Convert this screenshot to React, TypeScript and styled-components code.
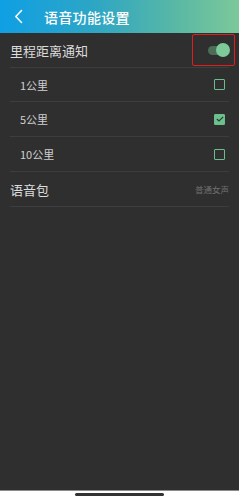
import React, { useState } from 'react'
import styled, { createGlobalStyle } from 'styled-components'

const GlobalStyle = createGlobalStyle`
  html, body {
    margin: 0;
    padding: 0;
    height: 100%;
    background: #2f2f2f;
    font-family: "Noto Sans CJK SC", "Noto Sans", sans-serif;
  }
  #root {
    height: 100%;
  }
`

const Screen = styled.div`
  height: 500px;
  display: flex;
  flex-direction: column;
  background: #2f2f2f;
`

const Header = styled.header`
  height: 33px;
  flex-shrink: 0;
  display: flex;
  align-items: center;
  padding-left: 10px;
  background: linear-gradient(90deg, #0f9fe4 0%, #2ea6c4 40%, #5bb9a4 75%, #7cc89a 100%);
`

const BackButton = styled.button`
  width: 16px;
  height: 20px;
  padding: 0;
  border: none;
  background: none;
  display: flex;
  align-items: center;
  justify-content: center;
`

const Title = styled.h1`
  margin: 0 0 0 18px;
  font-size: 14px;
  font-weight: 500;
  color: #ffffff;
  letter-spacing: 0.3px;
`

const List = styled.div`
  flex: 1;
  display: flex;
  flex-direction: column;
`

const Row = styled.div<{ $sub?: boolean; $h?: number }>`
  height: ${(p) => p.$h ?? 35}px;
  box-sizing: border-box;
  margin: 0 10px;
  padding-left: ${(p) => (p.$sub ? '10px' : '0')};
  display: flex;
  align-items: center;
  justify-content: space-between;
  border-bottom: 1px solid #3d3d3d;
`

const Label = styled.span<{ $sub?: boolean }>`
  font-size: ${(p) => (p.$sub ? '11px' : '13px')};
  color: ${(p) => (p.$sub ? '#d0d0d0' : '#dcdcdc')};
`

const Value = styled.span`
  font-size: 8.5px;
  color: #6f6f6f;
`

const SwitchWrap = styled.div`
  position: relative;
  width: 43px;
  height: 32px;
  margin-right: -6px;
  display: flex;
  align-items: center;
  justify-content: flex-end;
  padding-right: 6px;
  box-sizing: border-box;
`

const Highlight = styled.div`
  position: absolute;
  inset: 0;
  border: 1px solid #e01e1e;
  border-radius: 2px;
`

const Track = styled.div<{ $on: boolean }>`
  position: relative;
  width: 18px;
  height: 9px;
  margin-right: 3px;
  border-radius: 5px;
  background: ${(p) => (p.$on ? '#4c6e58' : '#555')};
`

const Knob = styled.div<{ $on: boolean }>`
  position: absolute;
  top: -2.5px;
  left: ${(p) => (p.$on ? '8px' : '-4px')};
  width: 14px;
  height: 14px;
  border-radius: 50%;
  background: ${(p) => (p.$on ? '#7ccb98' : '#aaa')};
`

const Box = styled.div<{ $checked: boolean }>`
  width: 11px;
  height: 11px;
  box-sizing: border-box;
  margin-right: 4px;
  border: 1.5px solid #69be8b;
  border-radius: 1px;
  background: ${(p) => (p.$checked ? '#6cc28e' : 'transparent')};
  display: flex;
  align-items: center;
  justify-content: center;
`

const HomeArea = styled.div`
  height: 10px;
  flex-shrink: 0;
  background: #ffffff;
  border-top: 1px solid #8a8a8a;
  display: flex;
  justify-content: center;
  padding-top: 2px;
  box-sizing: border-box;
`

const HomeBar = styled.div`
  width: 89px;
  height: 3px;
  border-radius: 2px;
  background: #333;
`

const options = ['1公里', '5公里', '10公里']

export default function App() {
  const [notify, setNotify] = useState(true)
  const [selected, setSelected] = useState('5公里')

  return (
    <>
      <GlobalStyle />
      <Screen>
        <Header>
          <BackButton>
            <svg width="9" height="15" viewBox="0 0 9 15">
              <path d="M7.5 1.5 L1.8 7.5 L7.5 13.5" fill="none" stroke="#fff" strokeWidth="1.6" strokeLinecap="round" strokeLinejoin="round" />
            </svg>
          </BackButton>
          <Title>语音功能设置</Title>
        </Header>
        <List>
          <Row>
            <Label>里程距离通知</Label>
            <SwitchWrap onClick={() => setNotify(!notify)}>
              <Highlight />
              <Track $on={notify}>
                <Knob $on={notify} />
              </Track>
            </SwitchWrap>
          </Row>
          {options.map((o, i) => (
            <Row $sub $h={i === 0 ? 34 : 35} key={o} onClick={() => setSelected(o)}>
              <Label $sub>{o}</Label>
              <Box $checked={selected === o}>
                {selected === o && (
                  <svg width="8" height="6" viewBox="0 0 8 6">
                    <path d="M0.8 3 L3 5 L7.2 0.8" fill="none" stroke="#2f3a33" strokeWidth="1.2" />
                  </svg>
                )}
              </Box>
            </Row>
          ))}
          <Row>
            <Label>语音包</Label>
            <Value>普通女声</Value>
          </Row>
        </List>
        <HomeArea>
          <HomeBar />
        </HomeArea>
      </Screen>
    </>
  )
}
